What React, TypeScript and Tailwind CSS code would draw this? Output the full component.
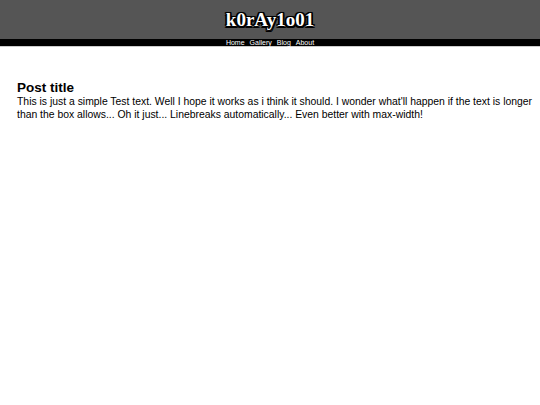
export default function App() {
  return (
    <div className="min-h-screen bg-white" style={{ fontFamily: '"Liberation Sans", Arial, sans-serif' }}>
      <header className="bg-[#555555] h-[39px] flex items-center justify-center">
        <h1
          className="text-white font-bold text-[19px] leading-none [text-shadow:1.5px_1.5px_0_#000,-1.5px_-1.5px_0_#000,1.5px_-1.5px_0_#000,-1.5px_1.5px_0_#000,0_1.5px_0_#000,1.5px_0_0_#000,0_-1.5px_0_#000,-1.5px_0_0_#000,0_0_2px_#000]"
          style={{ fontFamily: '"Liberation Serif", "Times New Roman", serif' }}
        >
          k0rAy1o01
        </h1>
      </header>
      <nav className="bg-black h-[7px] flex items-center justify-center gap-[5px] text-white text-[7px] leading-none border-b border-[#cccccc] box-content">
        <a>Home</a>
        <a>Gallery</a>
        <a>Blog</a>
        <a>About</a>
      </nav>
      <main className="pl-[17px] pr-[4px] pt-[33px]">
        <h2 className="font-bold text-[13.5px] leading-[15px] text-black">Post title</h2>
        <p className="text-[10.4px] leading-[13px] text-black">
          This is just a simple Test text. Well I hope it works as i think it should. I wonder what'll happen if the text is longer than the box allows... Oh it just... Linebreaks automatically... Even better with max-width!
        </p>
      </main>
    </div>
  );
}
